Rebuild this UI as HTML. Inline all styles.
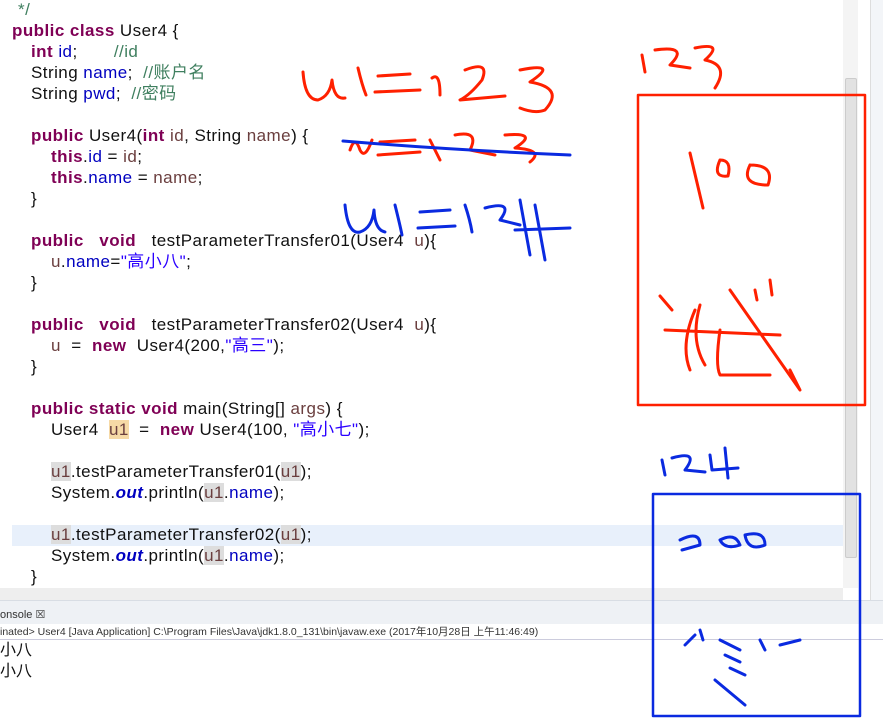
<!DOCTYPE html>
<html><head><meta charset="utf-8"><style>
body{margin:0;width:883px;height:727px;overflow:hidden;background:#fff;font-family:"Liberation Sans","Noto Sans CJK SC",sans-serif;position:relative}
.code{position:absolute;left:0;top:0;width:843px;height:588px;background:#fff}
.l{position:absolute;left:12px;font-size:17px;letter-spacing:0.45px;white-space:pre;color:#111;line-height:20px}
.k{color:#7f0055;font-weight:bold}
.f{color:#0000c0}
.c{color:#3f7f5f}
.s{color:#2a00ff}
.p{color:#6a3e3e}
.o{color:#0000c0;font-style:italic;font-weight:bold}
.hl{background:#ddd;}
.hy{background:#f6d9a6}
.in1{left:31px}.in2{left:51px}
</style></head><body>
<div class="code">
<div style="position:absolute;left:12px;top:525px;width:831px;height:21px;background:#e8f0fb"></div>
<div class="l c" style="top:0px;left:18px">*/</div>
<div class="l" style="top:21px"><span class="k">public class</span> User4 {</div>
<div class="l in1" style="top:42px"><span class="k">int</span> <span class="f">id</span>;       <span class="c">//id</span></div>
<div class="l in1" style="top:63px">String <span class="f">name</span>;  <span class="c">//账户名</span></div>
<div class="l in1" style="top:84px">String <span class="f">pwd</span>;  <span class="c">//密码</span></div>
<div class="l in1" style="top:126px"><span class="k">public</span> User4(<span class="k">int</span> <span class="p">id</span>, String <span class="p">name</span>) {</div>
<div class="l in2" style="top:147px"><span class="k">this</span>.<span class="f">id</span> = <span class="p">id</span>;</div>
<div class="l in2" style="top:168px"><span class="k">this</span>.<span class="f">name</span> = <span class="p">name</span>;</div>
<div class="l in1" style="top:189px">}</div>
<div class="l in1" style="top:231px"><span class="k">public</span>   <span class="k">void</span>   testParameterTransfer01(User4  <span class="p">u</span>){</div>
<div class="l in2" style="top:252px"><span class="p">u</span>.<span class="f">name</span>=<span class="s">"高小八"</span>;</div>
<div class="l in1" style="top:273px">}</div>
<div class="l in1" style="top:315px"><span class="k">public</span>   <span class="k">void</span>   testParameterTransfer02(User4  <span class="p">u</span>){</div>
<div class="l in2" style="top:336px"><span class="p">u</span>  =  <span class="k">new</span>  User4(200,<span class="s">"高三"</span>);</div>
<div class="l in1" style="top:357px">}</div>
<div class="l in1" style="top:399px"><span class="k">public static void</span> main(String[] <span class="p">args</span>) {</div>
<div class="l in2" style="top:420px">User4  <span class="p hy">u1</span>  =  <span class="k">new</span> User4(100, <span class="s">"高小七"</span>);</div>
<div class="l in2" style="top:462px"><span class="p hl">u1</span>.testParameterTransfer01(<span class="p hl">u1</span>);</div>
<div class="l in2" style="top:483px">System.<span class="o">out</span>.println(<span class="p hl">u1</span>.<span class="f">name</span>);</div>
<div class="l in2" style="top:525px"><span class="p hl">u1</span>.testParameterTransfer02(<span class="p hl">u1</span>);</div>
<div class="l in2" style="top:546px">System.<span class="o">out</span>.println(<span class="p hl">u1</span>.<span class="f">name</span>);</div>
<div class="l" style="top:567px;left:31px">}</div>
</div>
<div style="position:absolute;left:843px;top:0;width:15px;height:588px;background:#f4f4f4"></div>
<div style="position:absolute;left:845px;top:78px;width:10px;height:478px;background:#e2e2e2;border:1px solid #ccc;border-radius:2px"></div>
<div style="position:absolute;left:0;top:588px;width:843px;height:12px;background:#eeeeee"></div>
<div style="position:absolute;left:870px;top:0;width:13px;height:600px;background:#f3f5f8;border-left:1px solid #ddd"></div>
<div style="position:absolute;left:0;top:600px;width:883px;height:24px;background:#eef1f5;border-top:1px solid #d8dde4"></div>
<div style="position:absolute;left:0;top:608px;font-size:11px;color:#333">onsole ☒</div>
<div style="position:absolute;left:0;top:624px;width:883px;height:15px;background:#fff;border-bottom:1px solid #ccd;font-size:10.5px;color:#333;white-space:nowrap">inated&gt; User4 [Java Application] C:\Program Files\Java\jdk1.8.0_131\bin\javaw.exe (2017年10月28日 上午11:46:49)</div>
<div style="position:absolute;left:-16px;top:640px;font-size:16px;line-height:21px;color:#111">高小八<br>高小八</div>
<svg width="883" height="727" style="position:absolute;left:0;top:0" fill="none" stroke-linecap="round" stroke-linejoin="round">
<g stroke="#ff2000" stroke-width="3">
<path d="M303 72 Q305 100 318 100 Q330 96 332 80 Q334 100 345 98"/>
<path d="M358 68 Q362 85 366 95"/>
<path d="M378 76 L410 74 M375 92 L420 90"/>
<path d="M432 78 Q440 72 440 95"/>
<path d="M465 70 Q490 60 482 80 Q470 95 460 100 L505 96"/>
<path d="M520 70 Q560 62 530 82 Q565 88 545 110 Q535 114 520 108"/>
<path d="M350 150 Q355 135 360 150 Q365 160 372 140 M380 142 L415 140 M378 155 L420 152 M430 140 L440 160 M455 135 Q480 130 470 150 L495 155 M505 135 Q540 132 515 148 Q545 150 530 162"/>
<path d="M642 55 L645 72 M655 50 Q690 45 670 65 L690 68 M695 48 Q725 42 705 60 Q730 65 715 88"/>
<rect x="638" y="95" width="227" height="310" stroke-width="2.5"/>
<path d="M690 153 L703 208 M720 160 Q712 178 728 176 Q732 160 720 160 M750 165 Q740 185 768 185 Q775 165 750 165"/>
<path d="M660 296 L672 310 M665 330 L780 335 M695 310 Q680 345 690 370 M700 305 Q690 340 705 365 M730 290 L800 390 L790 370 M720 330 Q715 365 720 375 L770 375 M755 290 L757 300 M770 280 L772 295"/>
</g>
<g stroke="#0a2ae0" stroke-width="3">
<path d="M343 141 Q450 150 570 155"/>
<path d="M345 205 Q348 235 360 232 Q372 228 374 210 Q375 230 385 232"/>
<path d="M395 205 Q400 225 402 235 M420 212 L450 210 M418 228 L455 226 M465 205 Q470 220 472 232 M485 208 Q515 200 500 220 L520 225 M520 200 L530 255 M515 230 L570 228 M535 205 L545 260"/>
<path d="M662 460 L665 475 M672 458 Q700 450 685 470 L705 472 M710 455 L712 470 L738 468 M725 448 L728 478"/>
<rect x="653" y="494" width="207" height="222" stroke-width="2.5"/>
<path d="M680 540 Q700 530 700 545 L682 550 M720 540 Q735 532 740 545 Q725 550 720 540 M745 535 Q765 530 765 545 Q748 552 745 535"/>
<path d="M685 645 L695 635 M700 630 L703 640 M720 640 L740 650 M725 655 L740 662 M730 668 L745 675 M760 640 L765 650 M780 645 L800 640 M715 680 L745 705"/>
</g>
</svg>
</body></html>
